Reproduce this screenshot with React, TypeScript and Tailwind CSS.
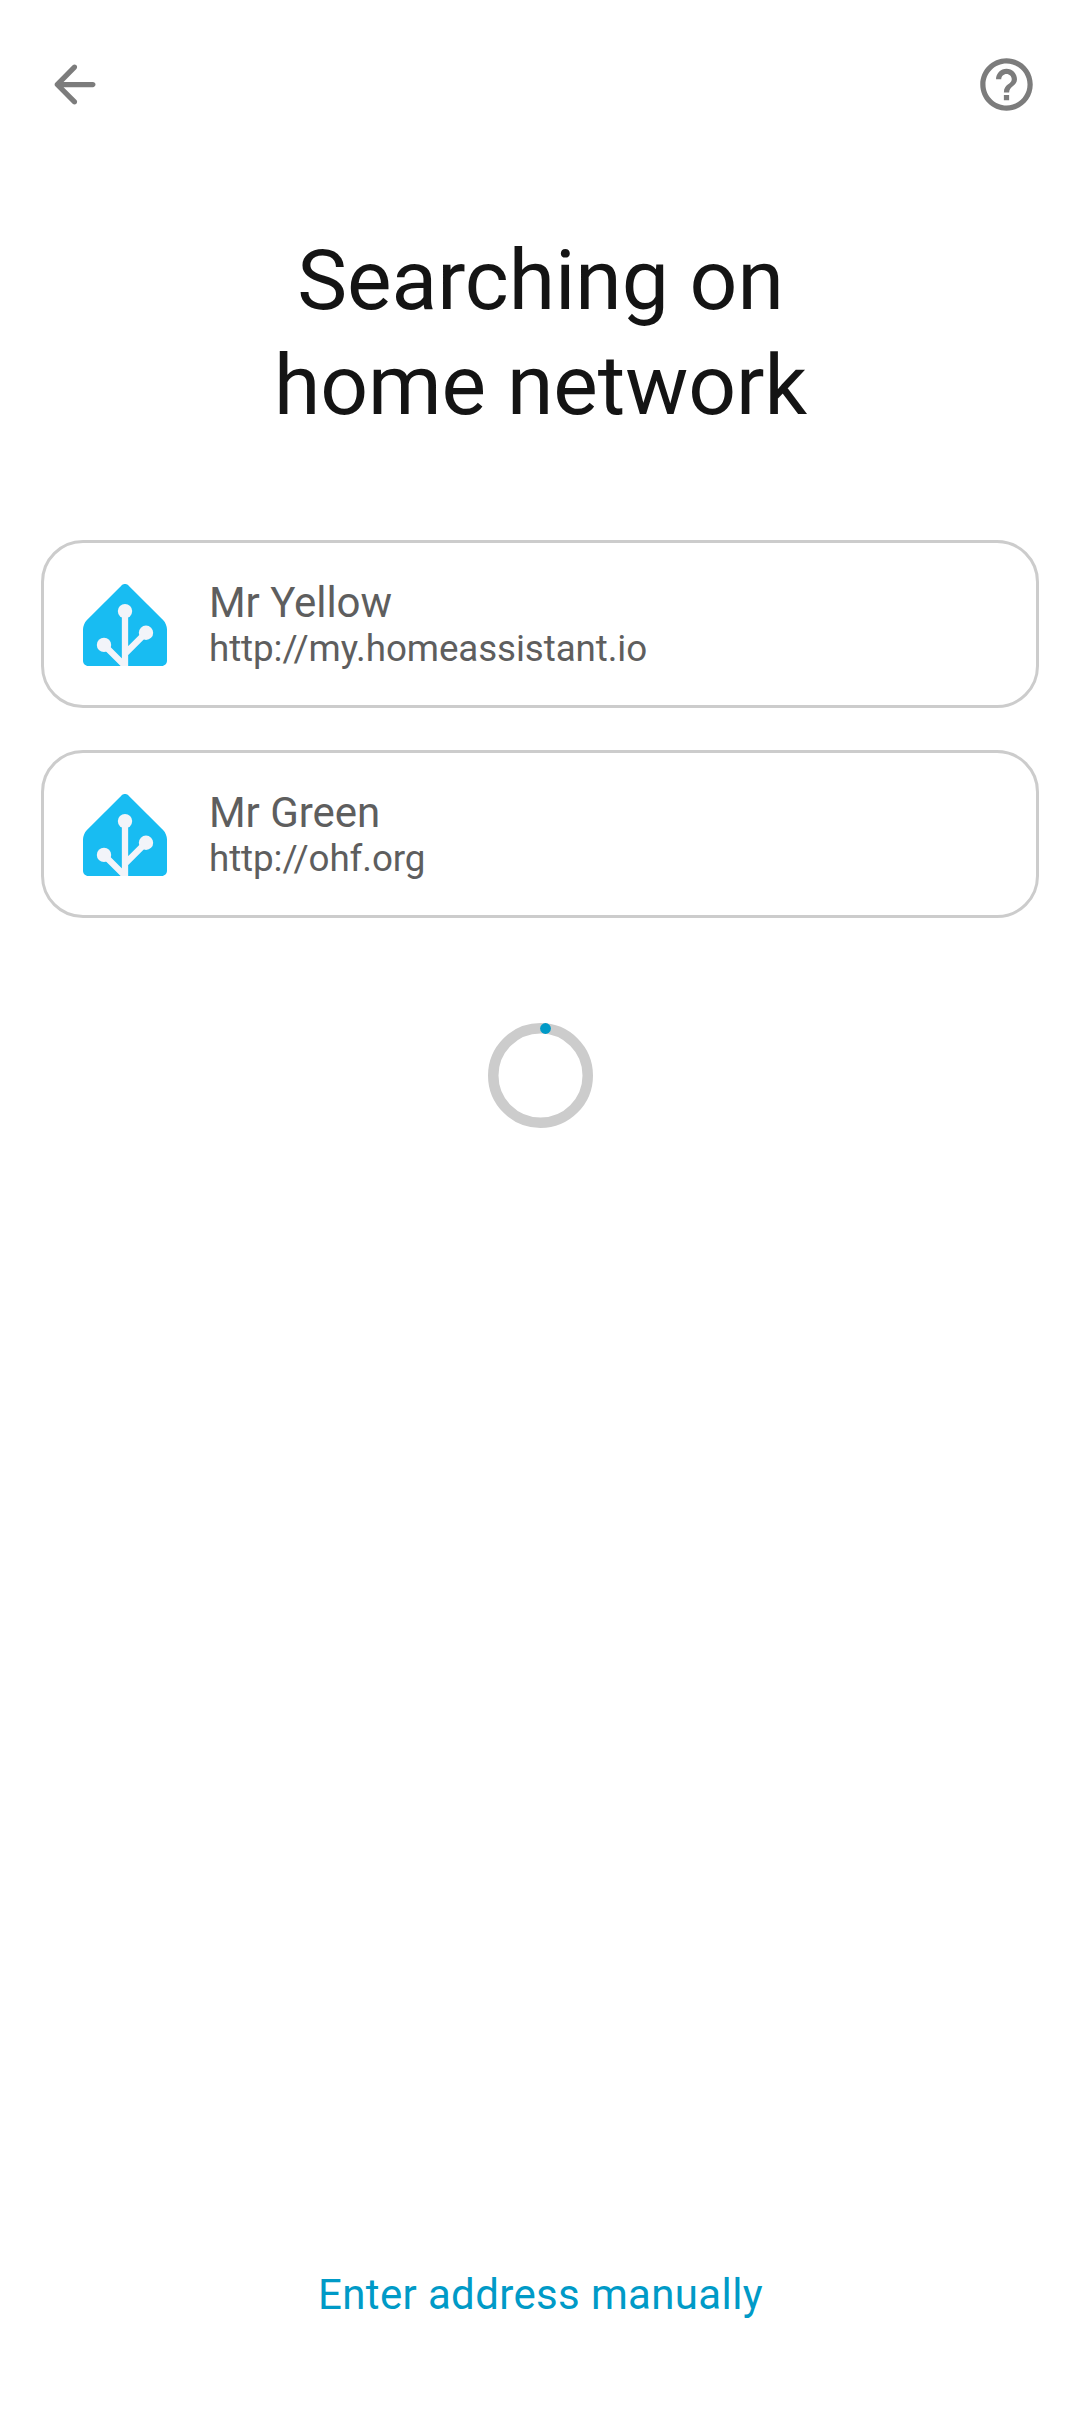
const servers = [
  { name: "Mr Yellow", url: "http://my.homeassistant.io" },
  { name: "Mr Green", url: "http://ohf.org" },
];

function BackIcon() {
  return (
    <svg viewBox="0 0 24 24" className="size-[63px]" fill="currentColor">
      <path d="M19 11H7.83l4.88-4.88c.39-.39.39-1.03 0-1.42-.39-.39-1.02-.39-1.41 0l-6.59 6.59c-.39.39-.39 1.02 0 1.41l6.59 6.59c.39.39 1.02.39 1.41 0 .39-.39.39-1.02 0-1.41L7.83 13H19c.55 0 1-.45 1-1s-.45-1-1-1z" />
    </svg>
  );
}

function HelpIcon() {
  return (
    <svg viewBox="0 0 24 24" className="size-[63px]" fill="currentColor">
      <path d="M11 18h2v-2h-2v2zm1-16C6.48 2 2 6.48 2 12s4.48 10 10 10 10-4.48 10-10S17.52 2 12 2zm0 18c-4.41 0-8-3.59-8-8s3.59-8 8-8 8 3.59 8 8-3.59 8-8 8zm0-14c-2.21 0-4 1.79-4 4h2c0-1.1.9-2 2-2s2 .9 2 2c0 2-3 1.75-3 5h2c0-2.25 3-2.5 3-5 0-2.21-1.79-4-4-4z" />
    </svg>
  );
}

function HomeLogo() {
  return (
    <svg viewBox="0 0 240 240" className="size-[84px] shrink-0">
      <path
        fill="#18bcf2"
        d="M240 224.76c0 8.25-6.75 15-15 15H15c-8.25 0-15-6.75-15-15v-90c0-8.25 4.77-19.77 10.61-25.61L109.39 10.37c5.83-5.83 15.38-5.83 21.21 0l98.79 98.79c5.83 5.83 10.61 17.36 10.61 25.61v89.99z"
      />
      <g stroke="#f2f4f9" strokeWidth="18" fill="none">
        <path d="M120 83V239.76M60 179.76l60 60M180 145l-60 60" />
      </g>
      <g fill="#f2f4f9">
        <circle cx="120" cy="83.2" r="20.5" />
        <circle cx="60" cy="179.76" r="20.5" />
        <circle cx="180" cy="145" r="20.5" />
      </g>
    </svg>
  );
}

function Spinner() {
  return (
    <svg viewBox="0 0 105 105" className="size-[105px]">
      <circle cx="52.5" cy="52.5" r="47.25" fill="none" stroke="#cccccc" strokeWidth="10.5" />
      <circle cx="57.5" cy="5.5" r="5.4" fill="#009ac7" />
    </svg>
  );
}

export default function App() {
  return (
    <div className="flex h-[2424px] w-[1080px] flex-col bg-white font-['Roboto',sans-serif]">
      <header className="flex h-[168px] items-center justify-between pr-[42px] pl-[43px] text-[#7c7c7c]">
        <button aria-label="Back">
          <BackIcon />
        </button>
        <button aria-label="Help">
          <HelpIcon />
        </button>
      </header>
      <h1 className="mt-[60px] pl-px text-center text-[84px] leading-[105px] tracking-[-0.05px] text-[#141414]">
        Searching on
        <br />
        home network
      </h1>
      <ul className="mx-[41px] mt-[102px] flex flex-col gap-[42px]">
        {servers.map((server) => (
          <li
            key={server.url}
            className="flex h-[168px] items-center gap-[42px] rounded-[42px] border-3 border-[#cccccc] pl-[39px] text-[#5e5e5e]"
          >
            <HomeLogo />
            <div className="flex flex-col">
              <span className="text-[42px] leading-[48px] tracking-[-0.05px]">{server.name}</span>
              <span className="text-[36.75px] leading-[43px] tracking-[-0.08px]">{server.url}</span>
            </div>
          </li>
        ))}
      </ul>
      <div className="mt-[105px] flex justify-center">
        <Spinner />
      </div>
      <button className="mt-auto mb-[95px] self-center pl-px text-[42px] leading-[68px] tracking-[0.36px] text-[#009ac7]">
        Enter address manually
      </button>
    </div>
  );
}
